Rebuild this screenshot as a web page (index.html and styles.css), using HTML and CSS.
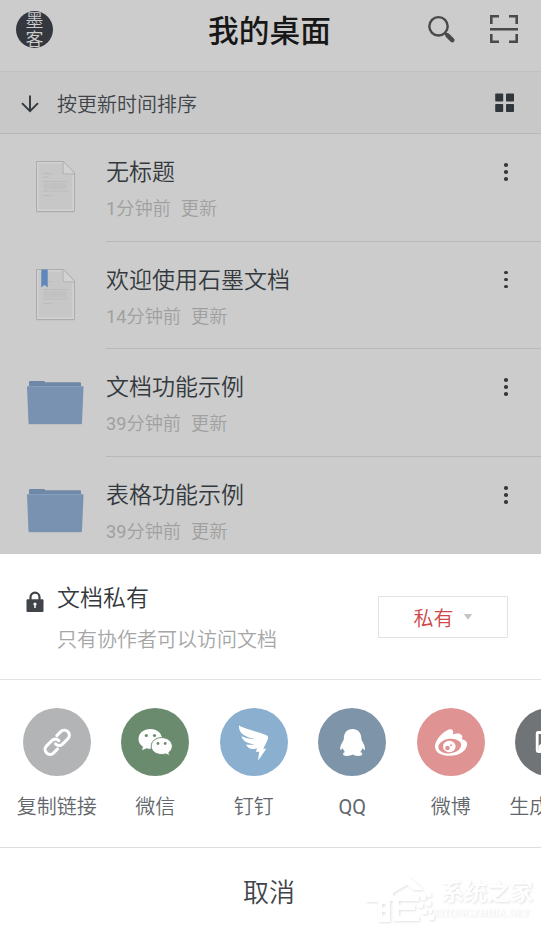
FILE: index.html
```html
<!DOCTYPE html>
<html lang="zh-CN">
<head>
<meta charset="utf-8">
<title>我的桌面</title>
<link rel="stylesheet" href="styles.css">
</head>
<body>
<svg class="defs" aria-hidden="true">
  <defs>
    <symbol id="doc" viewBox="0 0 42 54">
      <path d="M1.5 1.6H28.4L39.5 12.8V51.5H1.5Z" fill="#aaa" opacity=".35" transform="translate(0 1)"/>
      <path d="M1.5 1.5H28.4L39.5 12.8V51.5H1.5Z" fill="#cecece" stroke="#acacac"/>
      <path d="M3 3H27.500V14.500H38V50H3Z" fill="#c7c7c7" stroke="#d4d4d4"/>
      <path d="M28 2V14H39Z" fill="#d2d2d2"/>
      <path d="M28 2V14H39" fill="none" stroke="#aaa"/>
      <path d="M8 13.500H17M8 17H14M8 21.500H33M9 24H31M8 26H32M9 28H31M8 31H33M8 35.500H17" stroke="#b9b9b9" stroke-width=".9" stroke-dasharray="5 .6 3 .5"/>
    </symbol>
    <symbol id="folder" viewBox="0 0 60 48">
      <path d="M3 6V3Q3 2 4 2H18Q19 2 19 3.200H54Q55 3.200 55 4.500V10H3Z" fill="#6f88a8"/>
      <path d="M2 9H57L55.300 45.600H3Z" fill="#999" opacity=".5"/>
      <path d="M1 8Q1 7 2 7H56.500Q57.500 7 57.500 8L56 44Q56 45 55 45H3.500Q2.500 45 2.500 44Z" fill="#7a92b2"/>
      <path d="M1.500 7.600H57" stroke="#88a0c0"/>
    </symbol>
  </defs>
</svg>
<div class="screen">
  <header class="topbar">
    <div class="avatar"><span>墨</span><span>客</span></div>
    <h1>我的桌面</h1>
    <div class="actions">
      <svg width="30" height="30" viewBox="0 -.8 30 30"><circle cx="11.500" cy="11.500" r="9.200" fill="none" stroke="#494949" stroke-width="2.400"/><path d="M17.800 17.800L20.500 20.500" stroke="#494949" stroke-width="2.500"/><path d="M20.500 20.500L25.300 25.300" stroke="#494949" stroke-width="4.500" stroke-linecap="round"/></svg>
      <svg width="30" height="30" viewBox="0 0 30 30" fill="none" stroke="#494949" stroke-width="2.600"><path d="M2.300 10V2.300H10M20 2.300H27.700V10M27.700 20V27.700H20M10 27.700H2.300V20M1 15.200H29"/></svg>
    </div>
  </header>
  <div class="sortbar">
    <svg class="arrow" width="20" height="20" viewBox="0 0 20 20" fill="none" stroke="#33383d" stroke-width="1.900"><path d="M10 1.500V17M2 9.200L10 17.200L18 9.200"/></svg>
    <span>按更新时间排序</span>
    <svg width="20" height="20" viewBox="0 0 20 20" fill="#30373c"><rect x=".2" y=".5" width="8" height="8" rx=".8"/><rect x="11" y=".5" width="8" height="8" rx=".8"/><rect x=".2" y="11" width="8" height="8" rx=".8"/><rect x="11" y="11" width="8" height="8" rx=".8"/></svg>
  </div>
  <ul class="files">
    <li>
      <div class="thumb"><svg width="42" height="54"><use href="#doc"/></svg></div>
      <div class="info"><div><div class="name">无标题</div><div class="meta"><span><span class="latin">1</span>分钟前</span><span>更新</span></div></div><i class="more"></i></div>
    </li>
    <li>
      <div class="thumb"><svg width="42" height="54" viewBox="0 0 42 54"><use href="#doc"/><path d="M6.300 1.500H12.700V19.500L9.500 16.800L6.300 19.500Z" fill="#5f86bd"/></svg></div>
      <div class="info"><div><div class="name">欢迎使用石墨文档</div><div class="meta"><span><span class="latin">14</span>分钟前</span><span>更新</span></div></div><i class="more"></i></div>
    </li>
    <li>
      <div class="thumb folder"><svg width="60" height="48"><use href="#folder"/></svg></div>
      <div class="info"><div><div class="name">文档功能示例</div><div class="meta"><span><span class="latin">39</span>分钟前</span><span>更新</span></div></div><i class="more"></i></div>
    </li>
    <li>
      <div class="thumb folder"><svg width="60" height="48"><use href="#folder"/></svg></div>
      <div class="info"><div><div class="name">表格功能示例</div><div class="meta"><span><span class="latin">39</span>分钟前</span><span>更新</span></div></div><i class="more"></i></div>
    </li>
  </ul>
  <section class="sheet">
    <div class="privacy">
      <svg class="lock" width="18" height="22" viewBox="0 0 18 22"><path d="M4.500 9V6.200a4.500 4.500 0 0 1 9 0V9" fill="none" stroke="#414549" stroke-width="2.200"/><rect x=".5" y="8.300" width="17" height="12.600" rx="1" fill="#414549"/><circle cx="9" cy="13" r="1.600" fill="#fff"/><path d="M9 13V17" stroke="#fff" stroke-width="1.500"/></svg>
      <div class="privacy-text"><div class="name">文档私有</div><div class="hint">只有协作者可以访问文档</div></div>
      <button class="select">私有<svg width="10" height="8" viewBox="0 0 10 8"><path d="M.8 1H9.200L5 6.800Z" fill="#c4c5c7"/></svg></button>
    </div>
    <div class="share">
      <div class="item"><div class="disc link"><svg width="68" height="68" viewBox="0 0 68 68" fill="none" stroke="#fff" stroke-width="3.100" stroke-linecap="round"><g transform="translate(34.200 34.300) rotate(-45)"><path d="M-4.500 5H-10A5 5 0 0 1 -10 -5H-2.500A4.800 4.800 0 0 1 2.300 0"/><path d="M4.500 -5H10A5 5 0 0 1 10 5H2.500A4.800 4.800 0 0 1 -2.300 0"/></g></svg></div>复制链接</div>
      <div class="item"><div class="disc wechat"><svg width="68" height="68" viewBox="0 0 68 68"><path d="M29.500 21C22.500 21 17.500 25.300 17.500 31C17.500 34.300 19.200 37 22 38.800L21 42.300L25.500 40.200C27 40.600 29 40.900 31 40.700C36.500 40.500 41 36.500 41 31C41 25.300 36 21 29.500 21Z" fill="#fff"/><path d="M40.600 29.600C34.600 29.600 30.200 33.300 30.200 38.300C30.200 43 34.600 46.500 40.500 46.500C42 46.500 43.500 46.300 44.700 45.900L48.700 47.800L47.800 44.600C50 43 51.300 40.900 51.300 38.300C51.300 33.400 46.500 29.600 40.600 29.600Z" fill="#fff" stroke="#6b8b6f" stroke-width="1"/><g fill="#6b8b6f"><circle cx="25.300" cy="27.500" r="1.600"/><circle cx="33.500" cy="27.500" r="1.600"/><circle cx="37" cy="35.500" r="1.400"/><circle cx="44.200" cy="35.500" r="1.400"/></g></svg></div>微信</div>
      <div class="item"><div class="disc ding"><svg width="68" height="68" viewBox="0 0 68 68"><path d="M19 17.200C20 19.500 43 25 46.500 27.200C48.500 28.500 48.500 30 47.500 32L43.300 40.800H46.300L38 52.800L39.200 43.800H35.800L37.200 40.300C32 42 28 40.500 26 36.400C29 37 32 37 34.500 36.200C28 35.800 22.500 33.300 21.500 28.300C26 30.300 31 31.300 35.500 31.300C27 29.500 18 26.500 19 17.200Z" fill="#fff"/></svg></div>钉钉</div>
      <div class="item"><div class="disc qq"><svg width="68" height="68" viewBox="0 0 68 68"><path d="M34.500 21C29 21 25.600 25 25.800 31C25.800 33 22.200 36 22.200 41C22.500 43 23.800 41.500 24.800 40C25.200 41.700 26 43 27 44C24 45 24.500 47.800 28.500 47.900C31 48 33 47.500 34.500 46.500C36 47.500 38 48 40.500 47.900C45 47.800 45.500 45 42.200 44C43.200 43 44 41.700 44.400 40C45.500 41.500 46.700 43 47 41C47 36 43.400 33 43.400 31C43.500 25 40 21 34.500 21Z" fill="#fff"/></svg></div><span class="latin">QQ</span></div>
      <div class="item"><div class="disc weibo"><svg width="68" height="68" viewBox="0 0 68 68"><path d="M18 39C17.500 32.500 27 22 33 21.200C36 21 36.800 23.500 35.800 26.500C39 25 43.500 24.700 45 27.500C45.600 28.700 45.300 30 45 31.200C48.500 32 50.500 33.700 50.200 36.500C49.500 43 42 47.800 33 47.800C24.500 47.800 18.500 45 18 39Z" fill="#fff"/><ellipse cx="32.800" cy="38" rx="11.500" ry="7.300" transform="rotate(-7 33 38)" fill="#df9392"/><ellipse cx="32.300" cy="38.500" rx="6.300" ry="5.800" fill="#fff"/><circle cx="30.500" cy="40" r="2.300" fill="#df9392"/><circle cx="34" cy="37.300" r="1" fill="#df9392"/></svg></div>微博</div>
      <div class="item"><div class="disc image"><svg width="68" height="68" viewBox="0 0 68 68"><rect x="22.200" y="24.500" width="24" height="19" rx="1" fill="none" stroke="#fff" stroke-width="2.800"/><path d="M23.500 38L29 33L35 39L40 35L45 40V43H23.500Z" fill="#fff"/></svg></div>生成图片</div>
    </div>
    <button class="cancel">取消</button>
    <div class="watermark">
      <svg width="76" height="54" viewBox="0 0 76 54" fill="#fff"><path d="M5 31L50 6L65 19H54L48 14L34 22V25H60V30H40V34H56V39H40V45H60V50H34V30H31V51H19V31ZM23 33V37H27V33ZM23 41V45H27V41Z" fill-rule="evenodd"/><path d="M62 24H67V29H62ZM68 22H72V26H68ZM67 30H72V35H67ZM59 32H64V37H59ZM63 38H68V43H63ZM70 38H73V42H70ZM70 44H75V49H70Z"/></svg>
      <div><b>系统之家</b><small>XITONGZHIJIA.NET</small></div>
    </div>
  </section>
</div>
</body>
</html>
```
FILE: styles.css
```css
* { box-sizing: border-box; }
body {
  margin: 0;
  font-family: Roboto, "Noto Sans CJK SC", sans-serif;
  font-weight: 350;
  color: #34393e;
  background: #ccc;
}
h1, ul { margin: 0; padding: 0; font-weight: inherit; }
button { border: 0; padding: 0; background: none; font: inherit; color: inherit; }
svg { display: block; flex: none; }
.latin { font-weight: 400; }
.defs { width: 0; height: 0; position: absolute; }
.screen { width: 541px; height: 931px; overflow: hidden; display: flex; flex-direction: column; }

.topbar {
  height: 72px;
  flex: none;
  padding: 0 22px 13px 16px;
  display: grid;
  grid-template-columns: 1fr auto 1fr;
  align-items: center;
  border-bottom: 1px solid #c0c0c0;
}
.avatar {
  width: 37px;
  height: 37px;
  border-radius: 50%;
  overflow: hidden;
  background: #34373d;
  color: #ccc;
  font: 350 18px/19px "Noto Sans CJK SC", sans-serif;
  display: flex;
  flex-direction: column;
  align-items: center;
  justify-content: center;
}
.topbar h1 { font-size: 30.700px; line-height: 40px; font-weight: 500; color: #171717; padding: 5px 0 0 4px; }
.actions { display: flex; justify-content: flex-end; gap: 32px; }

.sortbar {
  height: 62px;
  flex: none;
  padding: 0 26px 0 20px;
  display: flex;
  align-items: center;
  background: #c8c8c8;
  border-bottom: 1px solid #b7b7b7;
  font-size: 20px;
  color: #404448;
}
.arrow { margin-top: 3px; }
.sortbar span { margin-left: 17px; padding-top: 2px; flex: 1; }

.files { list-style: none; flex: none; height: 420px; overflow: hidden; }
.files li { height: 107.700px; display: flex; }
.thumb { width: 106px; display: flex; align-items: center; justify-content: center; padding: 0 4px 2px 10px; }
.folder { padding-bottom: 0; }
.info {
  flex: 1;
  display: flex;
  justify-content: space-between;
  padding: 23px 33px 0 0;
  border-bottom: 1px solid #b8b8b8;
}
.name { font-size: 23px; line-height: 32px; }
.meta { display: flex; gap: 10px; margin-top: 6px; font-size: 18.200px; line-height: 28px; color: #a0a0a0; }
.more {
  width: 3.600px;
  height: 3.600px;
  border-radius: 50%;
  margin-top: 13px;
  background: #34393e;
  box-shadow: 0 -7px #34393e, 0 7px #34393e;
}

.sheet { position: relative; height: 377px; flex: none; background: #fff; }
.privacy { height: 126px; display: flex; padding: 29px 33px 0 26px; border-bottom: 1px solid #e2e2e2; }
.lock { margin-top: 8px; }
.privacy-text { flex: 1; margin-left: 13px; }
.hint { font-size: 20px; line-height: 30px; margin-top: 10px; color: #a6a6a6; }
.select {
  width: 130px;
  height: 42px;
  margin-top: 13px;
  border: 1px solid #e2e2e2;
  border-radius: 1px;
  display: flex;
  align-items: center;
  justify-content: center;
  gap: 9px;
  font-size: 20px;
  color: #ce484b;
}
.share { height: 168px; display: flex; overflow: hidden; padding: 28px 0 0 7.500px; border-bottom: 1px solid #ddd; }
.item {
  width: 98.500px;
  flex: none;
  display: flex;
  flex-direction: column;
  align-items: center;
  gap: 15.500px;
  font-size: 20px;
  line-height: 30px;
  color: #63676c;
}
.disc { width: 68px; height: 68px; border-radius: 50%; }
.link { background: #b3b4b6; }
.wechat { background: #6b8b6f; }
.ding { background: #8aafcf; }
.qq { background: #7e94a8; }
.weibo { background: #df9392; }
.image { background: #717477; }
.cancel { display: block; width: 100%; height: 83px; padding: 2px 3px 0 0; font-size: 26px; color: #40454a; }

.watermark {
  position: absolute;
  right: 8px;
  bottom: 6px;
  display: flex;
  align-items: center;
  color: #fff;
  filter: drop-shadow(1px 1px 1px #e2e2e2);
}
.watermark svg { margin-right: -3px; }
.watermark b { display: block; font-size: 23px; line-height: 27px; margin-left: 9px; }
.watermark small { display: block; font: 10.700px/12px "Liberation Serif", serif; }
```
